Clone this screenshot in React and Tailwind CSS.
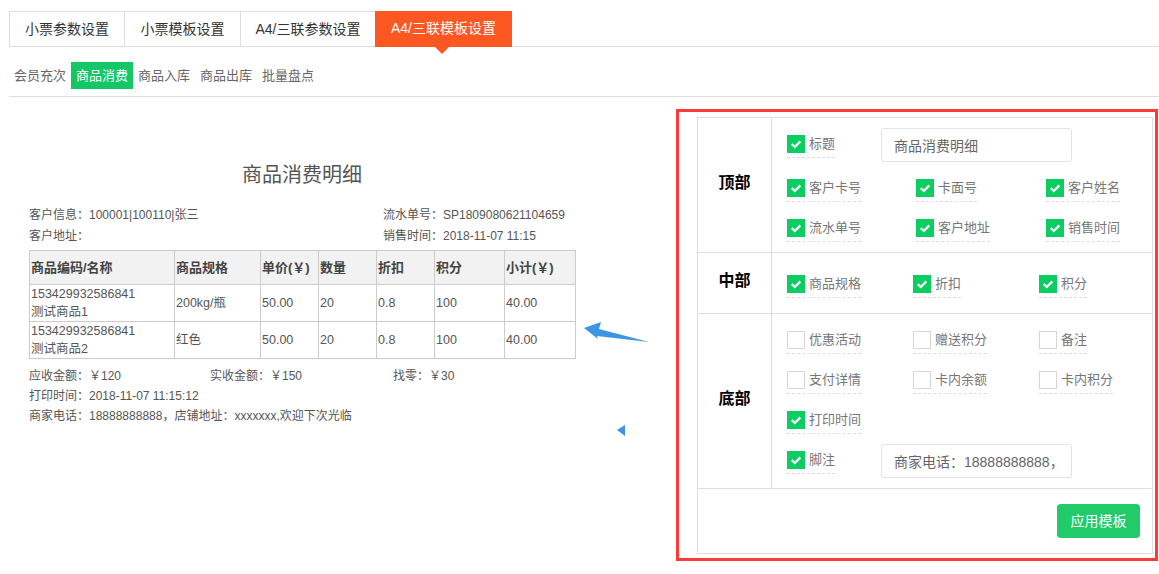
import React from "react";

const font = { fontFamily: '"Liberation Sans", "Noto Sans CJK SC", sans-serif' };

function Check({ checked }) {
  if (!checked) {
    return <span className="block w-[18px] h-[18px] border border-[#d6d6d6] bg-white shrink-0" />;
  }
  return (
    <span className="flex w-[18px] h-[18px] bg-[#0ccd62] items-center justify-center shrink-0">
      <svg width="12" height="12" viewBox="0 0 12 12">
        <path d="M1.8 6.2 L4.8 9 L10.3 3.4" stroke="#fff" strokeWidth="2.3" fill="none" />
      </svg>
    </span>
  );
}

function Item({ label, checked = true }) {
  return (
    <div className="flex flex-col w-fit">
      <div className="flex items-center h-[18px]">
        <Check checked={checked} />
        <span className="ml-[4px] text-[13px] leading-[18px] text-[#777] whitespace-nowrap">{label}</span>
      </div>
      <div className="mt-[4px] border-t border-dashed border-[#ddd]" />
    </div>
  );
}

function Section({ title, children }) {
  return (
    <div className="flex border-b border-[#ddd]">
      <div className="w-[74px] shrink-0 border-r border-[#ddd] flex items-center justify-center pb-[5px]">
        <span className="text-[16px] font-bold text-black">{title}</span>
      </div>
      <div className="flex-1 pl-[15px]">{children}</div>
    </div>
  );
}

const rows = [
  ["153429932586841", "测试商品1", "200kg/瓶"],
  ["153429932586841", "测试商品2", "红色"],
];

export default function App() {
  return (
    <div className="relative w-[1159px] h-[574px] overflow-hidden bg-white" style={font}>
      {/* top tabs */}
      <div className="ml-[9px] pt-[11px] flex border-b border-[#ddd]">
        <div className="w-[115px] h-[35px] border-t border-l border-[#ddd] text-center leading-[34px] text-[14px] text-[#333]">小票参数设置</div>
        <div className="w-[116px] h-[35px] border-t border-l border-[#ddd] text-center leading-[34px] text-[14px] text-[#333]">小票模板设置</div>
        <div className="w-[135px] h-[35px] border-t border-l border-[#ddd] text-center leading-[34px] text-[14px] text-[#333]">A4/三联参数设置</div>
        <div className="relative w-[137px] h-[36px] -mb-px bg-[#ff5722] text-center leading-[35px] text-[14px] text-white">
          A4/三联模板设置
          <span className="absolute left-[60px] top-[36px] w-0 h-0 border-l-[7px] border-r-[7px] border-t-[7px] border-l-transparent border-r-transparent border-t-[#ff5722]" />
        </div>
      </div>

      {/* sub tabs */}
      <div className="ml-[9px] flex pt-[15px] pb-[7px] border-b border-[#ddd] text-[13px]">
        <span className="h-[27px] leading-[27px] px-[5px] text-[#666]">会员充次</span>
        <span className="h-[27px] leading-[27px] px-[5px] bg-[#14c766] text-white">商品消费</span>
        <span className="h-[27px] leading-[27px] px-[5px] text-[#666]">商品入库</span>
        <span className="h-[27px] leading-[27px] px-[5px] text-[#666]">商品出库</span>
        <span className="h-[27px] leading-[27px] px-[5px] text-[#666]">批量盘点</span>
      </div>

      <div className="flex items-start">
        {/* preview */}
        <div className="ml-[29px] w-[546px] mt-[64px] text-[12px] text-[#555]">
          <div className="text-center text-[20px] leading-[28px] text-[#555]">商品消费明细</div>
          <div className="mt-[16px] flex justify-between leading-[21px]">
            <div>
              <div>客户信息：100001|100110|张三</div>
              <div>客户地址：</div>
            </div>
            <div className="w-[192px]">
              <div>流水单号：SP1809080621104659</div>
              <div>销售时间：2018-11-07 11:15</div>
            </div>
          </div>
          <table className="mt-[3px] w-[546px] table-fixed border-collapse">
            <colgroup>
              <col className="w-[145px]" />
              <col className="w-[86px]" />
              <col className="w-[58px]" />
              <col className="w-[58px]" />
              <col className="w-[58px]" />
              <col className="w-[70px]" />
              <col className="w-[71px]" />
            </colgroup>
            <thead>
              <tr className="bg-[#f2f2f2] text-[13px] font-bold text-[#444]">
                {["商品编码/名称", "商品规格", "单价(￥)", "数量", "折扣", "积分", "小计(￥)"].map((h) => (
                  <th key={h} className="h-[34px] border border-[#ccc] px-px text-left font-bold whitespace-nowrap">{h}</th>
                ))}
              </tr>
            </thead>
            <tbody className="text-[12.5px] text-[#555]">
              {rows.map((r, i) => (
                <tr key={i}>
                  <td className="h-[37px] border border-[#ccc] px-px leading-[18px]">
                    {r[0]}
                    <br />
                    {r[1]}
                  </td>
                  <td className="border border-[#ccc] px-px">{r[2]}</td>
                  <td className="border border-[#ccc] px-px">50.00</td>
                  <td className="border border-[#ccc] px-px">20</td>
                  <td className="border border-[#ccc] px-px">0.8</td>
                  <td className="border border-[#ccc] px-px">100</td>
                  <td className="border border-[#ccc] px-px">40.00</td>
                </tr>
              ))}
            </tbody>
          </table>
          <div className="mt-[7px] leading-[20px]">
            <div className="grid grid-cols-[181px_183px_182px]">
              <div>应收金额：￥120</div>
              <div>实收金额：￥150</div>
              <div>找零：￥30</div>
            </div>
            <div>打印时间：2018-11-07 11:15:12</div>
            <div>商家电话：18888888888，店铺地址：xxxxxxx,欢迎下次光临</div>
          </div>
        </div>

        {/* settings panel */}
        <div className="ml-[101px] mt-[12px] w-[482px] border-[3px] border-[#ff3a3a] pl-[18px] pt-[5px] pr-[2px] pb-[4px]">
          <div className="border border-[#ddd]">
            <Section title="顶部">
              <div className="pt-[10px] pb-[10px]">
                <div className="flex items-start h-[34px]">
                  <div className="w-[94px] pt-[7px]">
                    <Item label="标题" />
                  </div>
                  <input
                    readOnly
                    value="商品消费明细"
                    className="w-[191px] h-[34px] border border-[#e3e3e3] rounded-[3px] px-[12px] text-[14px] text-[#666] outline-none"
                  />
                </div>
                <div className="flex mt-[17px]">
                  <div className="w-[129px]"><Item label="客户卡号" /></div>
                  <div className="w-[130px]"><Item label="卡面号" /></div>
                  <div><Item label="客户姓名" /></div>
                </div>
                <div className="flex mt-[17px]">
                  <div className="w-[129px]"><Item label="流水单号" /></div>
                  <div className="w-[130px]"><Item label="客户地址" /></div>
                  <div><Item label="销售时间" /></div>
                </div>
              </div>
            </Section>
            <Section title="中部">
              <div className="flex pt-[22px] pb-[15px]">
                <div className="w-[126px]"><Item label="商品规格" /></div>
                <div className="w-[126px]"><Item label="折扣" /></div>
                <div><Item label="积分" /></div>
              </div>
            </Section>
            <Section title="底部">
              <div className="pt-[17px] pb-[10px]">
                <div className="flex">
                  <div className="w-[126px]"><Item label="优惠活动" checked={false} /></div>
                  <div className="w-[126px]"><Item label="赠送积分" checked={false} /></div>
                  <div><Item label="备注" checked={false} /></div>
                </div>
                <div className="flex mt-[17px]">
                  <div className="w-[126px]"><Item label="支付详情" checked={false} /></div>
                  <div className="w-[126px]"><Item label="卡内余额" checked={false} /></div>
                  <div><Item label="卡内积分" checked={false} /></div>
                </div>
                <div className="flex mt-[17px]">
                  <Item label="打印时间" />
                </div>
                <div className="flex items-start h-[34px] mt-[10px]">
                  <div className="w-[94px] pt-[7px]">
                    <Item label="脚注" />
                  </div>
                  <input
                    readOnly
                    value="商家电话：18888888888，店铺地址：xxxxxxx,欢迎下次光临"
                    className="w-[191px] h-[34px] border border-[#e3e3e3] rounded-[3px] px-[12px] text-[14px] text-[#666] outline-none"
                  />
                </div>
              </div>
            </Section>
            <div className="flex justify-end pt-[15px] pb-[15px] pr-[12px]">
              <button className="w-[83px] h-[34px] rounded-[4px] bg-[#21cb69] text-white text-[14px]">应用模板</button>
            </div>
          </div>
        </div>
      </div>

      {/* annotation arrows */}
      <svg className="absolute left-[578px] top-[315px]" width="80" height="125" viewBox="0 0 80 125">
        <polygon points="6,13 23,7 21,14 71,27 19,21 20,24" fill="#3b95e4" />
        <polygon points="39,115 47,110 47,121" fill="#3b95e4" />
      </svg>
    </div>
  );
}
